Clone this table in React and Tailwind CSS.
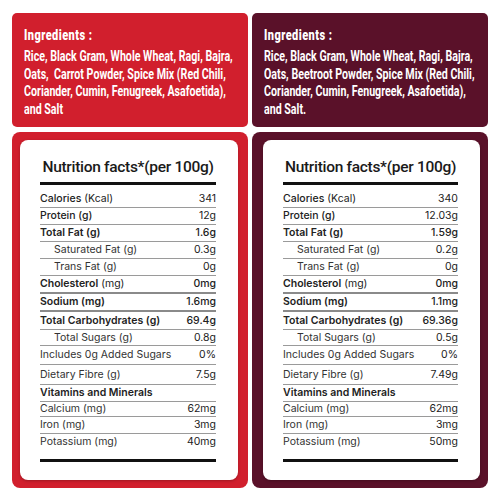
import React from 'react';

const left = {
  color: 'bg-[#d11f2d]',
  ingredients: [
    'Rice, Black Gram, Whole Wheat, Ragi, Bajra,',
    'Oats,\u00a0\u00a0Carrot Powder, Spice Mix (Red Chili,',
    'Coriander, Cumin, Fenugreek, Asafoetida),',
    'and Salt',
  ],
  values: ['341', '12g', '1.6g', '0.3g', '0g', '0mg', '1.6mg', '69.4g', '0.8g', '0%', '7.5g', '', '62mg', '3mg', '40mg'],
};

const right = {
  color: 'bg-[#5a1129]',
  ingredients: [
    'Rice, Black Gram, Whole Wheat, Ragi, Bajra,',
    'Oats, Beetroot Powder, Spice Mix (Red Chili,',
    'Coriander, Cumin, Fenugreek, Asafoetida),',
    'and Salt.',
  ],
  values: ['340', '12.03g', '1.59g', '0.2g', '0g', '0mg', '1.1mg', '69.36g', '0.5g', '0%', '7.49g', '', '62mg', '3mg', '50mg'],
};

// label, unit, style, row height, line under
const rows = [
  ['Calories', ' (Kcal)', 'medium', 'h-[17px]', 'border-[#9a9a9a]'],
  ['Protein (g)', '', 'medium', 'h-[17px]', 'border-[#9a9a9a]'],
  ['Total Fat (g)', '', 'semi', 'h-[17px]', 'border-[#9a9a9a]'],
  ['Saturated Fat (g)', '', 'indent', 'h-[17px]', 'border-[#9a9a9a]'],
  ['Trans Fat (g)', '', 'indent', 'h-[17px]', 'border-[#9a9a9a]'],
  ['Cholesterol', ' (mg)', 'semi', 'h-[18px]', 'border-[#8a8a8a] border-b-2'],
  ['Sodium (mg)', '', 'semi', 'h-[18px]', 'border-[#8a8a8a] border-b-2'],
  ['Total Carbohydrates (g)', '', 'semi', 'h-[18px]', 'border-[#9a9a9a]'],
  ['Total Sugars (g)', '', 'indent', 'h-[16px]', 'border-[#9a9a9a]'],
  ['Includes 0g Added Sugars', '', 'plain', 'h-[19px]', 'border-[#9a9a9a]'],
  ['Dietary Fibre (g)', '', 'plain', 'h-[20px]', 'border-[#9a9a9a]'],
  ['Vitamins and Minerals', '', 'semi', 'h-[17px]', 'border-[#9a9a9a]'],
  ['Calcium (mg)', '', 'plain', 'h-[15px]', 'border-[#9a9a9a]'],
  ['Iron (mg)', '', 'plain', 'h-[17px]', 'border-[#9a9a9a]'],
  ['Potassium (mg)', '', 'plain', 'h-[17px]', 'border-transparent'],
];

function Ingredients({ data }) {
  return (
    <div className={`${data.color} rounded-[5px] h-[114px] pl-3 pt-[12px] text-white overflow-hidden`}
      style={{ fontFamily: 'Roboto, sans-serif' }}>
      {/* condensed look: Roboto squeezed horizontally */}
      <div className="w-[310px] origin-left scale-x-[0.71]">
        <div className="text-[15.5px] font-black leading-[20px] tracking-[0.6px] whitespace-nowrap">Ingredients :</div>
        <div className="text-[15px] font-bold leading-[17.7px] mt-[3px]">
          {data.ingredients.map((line) => (
            <div key={line} className="whitespace-nowrap">{line}</div>
          ))}
        </div>
      </div>
    </div>
  );
}

function Nutrition({ data, pad }) {
  return (
    <div className={`${data.color} rounded-[8px] h-[356px] ${pad}`}>
      <div className="bg-white rounded-[8px] h-full pt-[17px] shadow-[0_1px_3px_rgba(0,0,0,0.25)]" style={{ fontFamily: 'Inter, sans-serif' }}>
        <div className="mx-[20px] mr-[22px]">
          <h2 className="text-[15.5px] font-medium text-[#1a1a1a] text-center whitespace-nowrap tracking-[-0.3px] leading-[20px]"
            style={{ fontFamily: 'Roboto, sans-serif' }}>
            Nutrition facts*(per 100g)
          </h2>
          <div className="h-[3px] bg-[#111] mt-[5px] mb-[6px]" />
          {rows.map(([label, unit, style, h, line], i) => (
            <div key={label} className={`flex items-center justify-between ${h} border-b ${line} text-[10.5px] text-[#222]`}>
              <span className={
                style === 'semi' ? 'font-semibold' :
                style === 'medium' ? 'font-medium' :
                style === 'indent' ? 'pl-[14px] text-[#333]' : 'text-[#333]'
              }>
                {label}<span className="font-normal">{unit}</span>
              </span>
              <span className={style === 'semi' ? 'font-medium' : ''}>{data.values[i]}</span>
            </div>
          ))}
          <div className="h-[3px] bg-[#111] mt-[8px]" />
        </div>
      </div>
    </div>
  );
}

export default function App() {
  return (
    <div className="w-[500px] h-[500px] bg-white px-[12px] pt-[13px]">
      <div className="grid grid-cols-2 gap-x-[4px]">
        <Ingredients data={left} />
        <Ingredients data={right} />
      </div>
      <div className="grid grid-cols-2 gap-x-[4px] mt-[5px]">
        <Nutrition data={left} pad="pl-[8px] pr-[10px] py-[8px]" />
        <Nutrition data={right} pad="pl-[11px] pr-[8px] py-[8px]" />
      </div>
    </div>
  );
}
